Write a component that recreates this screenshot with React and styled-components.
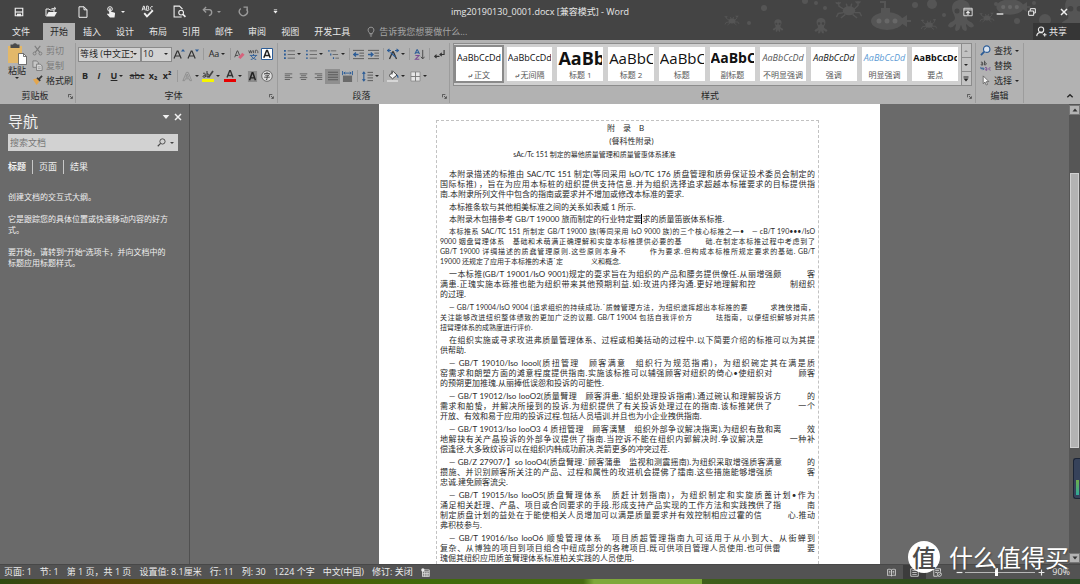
import React from "react";
import styled, { createGlobalStyle, css } from "styled-components";

const GlobalStyle = createGlobalStyle`
  * {
    box-sizing: border-box;
  }
  body {
    margin: 0;
    overflow: hidden;
    font-family: "Open Sans", "Noto Sans CJK SC", sans-serif;
    font-size: 9px;
    line-height: 12px;
    color: #262626;
  }
  button, select, input {
    font: inherit;
    color: inherit;
    margin: 0;
    padding: 0;
    border: 0;
    background: none;
  }
`;

const Window = styled.div`
  position: relative;
  display: flex;
  flex-direction: column;
  height: 100vh;
  overflow: hidden;
  background: #6a6a6a;
`;

/* ---------- header ---------- */

const Header = styled.header`
  position: relative;
  flex: none;
  background: #444;
  color: #e8e8e8;
`;

const Sea = styled.svg`
  position: absolute;
  top: 0;
  right: 0;
  width: 380px;
  height: 40px;
`;

const TitleBar = styled.div`
  position: relative;
  display: grid;
  grid-template-columns: 1fr auto 1fr;
  align-items: center;
  height: 23px;
`;

const QuickAccess = styled.div`
  display: flex;
  align-items: center;
  padding-left: 3px;
`;

const BarButton = styled.button`
  display: flex;
  align-items: center;
  justify-content: center;
  gap: 4px;
  width: 32px;
  height: 22px;
  color: ${(p) => (p.$dim ? "#9a9a9a" : "#f0f0f0")};
`;

const Title = styled.h1`
  margin: 0;
  font-size: 9px;
  font-weight: 400;
`;

const WindowControls = styled.div`
  display: flex;
  justify-content: flex-end;
`;

const TabRow = styled.nav`
  position: relative;
  display: flex;
  align-items: stretch;
  gap: 1px;
  height: 17px;
`;

const Tab = styled.button`
  padding: 0 ${(p) => (p.$file ? "12px" : "7px")};
  white-space: nowrap;
  ${(p) =>
    p.$active &&
    css`
      background: #b2b2b2;
      color: #262626;
    `}
`;

const TellMe = styled.label`
  display: flex;
  align-items: center;
  gap: 3px;
  margin-left: 8px;
  color: #a6a6a6;
  input {
    width: 120px;
    outline: none;
  }
  input::placeholder {
    color: #a6a6a6;
    opacity: 1;
  }
`;

const Share = styled.button`
  display: flex;
  align-items: center;
  gap: 2px;
  margin-left: auto;
  padding: 0 13px 0 3px;
  background: #363636;
`;

/* ---------- ribbon ---------- */

const Ribbon = styled.div`
  display: flex;
  flex: none;
  height: 64px;
  padding: 3px 0 1px;
  background: #b2b2b2;
`;

const Group = styled.section`
  display: flex;
  flex-direction: column;
  flex: ${(p) => (p.$grow ? "1" : "none")};
  min-width: 0;
  padding: ${(p) => p.$pad || "0 2px"};
  border-right: 1px solid #9c9c9c;
`;

const GroupBody = styled.div`
  display: flex;
  flex-direction: ${(p) => (p.$column ? "column" : "row")};
  height: 45px;
`;

const GroupFoot = styled.div`
  display: flex;
  align-items: center;
  height: 15px;
  h2 {
    flex: 1;
    margin: 0;
    font-size: 9px;
    font-weight: 400;
    text-align: center;
    white-space: nowrap;
  }
`;

const ToolRow = styled.div`
  display: flex;
  align-items: center;
  height: 22px;
`;

const Tool = styled.button`
  display: flex;
  flex: none;
  align-items: center;
  justify-content: center;
  gap: 2px;
  width: ${(p) => p.$w || 14}px;
  height: 15px;
  background: ${(p) => (p.$pressed ? "#8f8f8f" : "none")};
  font-weight: ${(p) => (p.$bold ? 700 : 400)};
`;

const Divider = styled.span`
  flex: none;
  width: ${(p) => p.$w || 4}px;
  height: 12px;
  background: linear-gradient(#9a9a9a, #9a9a9a) center / 1px 100% no-repeat;
`;

const Caret = styled.span`
  flex: none;
  border: 2px solid transparent;
  border-top-color: currentColor;
  border-bottom: 0;
`;

const Combo = styled.label`
  position: relative;
  display: flex;
  align-items: center;
  width: ${(p) => p.$w}px;
  height: 15px;
  padding-right: 3px;
  border: 1px solid #8a8a8a;
  background: #d2d2d2;
  select {
    flex: 1;
    min-width: 0;
    height: 13px;
    padding-left: 1px;
    appearance: none;
    outline: none;
    text-overflow: clip;
  }
`;

const Paste = styled.button`
  display: flex;
  flex-direction: column;
  align-items: center;
  width: 30px;
  line-height: 12px;
`;

const CommandList = styled.div`
  display: flex;
  flex-direction: column;
  justify-content: space-between;
  height: 45px;
`;

const Command = styled.button`
  display: flex;
  align-items: center;
  gap: 3px;
  height: 15px;
  white-space: nowrap;
  color: ${(p) => (p.$off ? "#7c7c7c" : "inherit")};
`;

const Gallery = styled.div`
  display: flex;
  flex: 1;
  min-width: 0;
  height: 43px;
  border: 1px solid #8c8c8c;
  background: #d0d0d0;
`;

const Cards = styled.div`
  display: flex;
  flex: 1;
  gap: 5px;
  min-width: 0;
  padding: 3px 3px 4px 2px;
`;

const StyleCard = styled.button`
  display: flex;
  flex: 1 1 0;
  flex-direction: column;
  align-items: center;
  justify-content: space-between;
  min-width: 0;
  padding: 1px 1px 0;
  overflow: hidden;
  background: #fff;
  outline: ${(p) => (p.$active ? "2px solid #8a8a8a" : "none")};
`;

const Sample = styled.span`
  display: block;
  width: 100%;
  overflow: hidden;
  white-space: nowrap;
  text-align: ${(p) => (p.$size > 9 ? "left" : "center")};
  line-height: 20px;
  font-size: ${(p) => p.$size}px;
  font-weight: ${(p) => (p.$bold ? 700 : 400)};
  font-style: ${(p) => (p.$italic ? "italic" : "normal")};
  color: ${(p) => p.$color || "#111"};
`;

const StyleName = styled.span`
  font-size: 8px;
  line-height: 12px;
  white-space: nowrap;
  color: #555;
`;

const GalleryButtons = styled.div`
  display: flex;
  flex-direction: column;
  width: 10px;
  border-left: 1px solid #8c8c8c;
  button {
    display: flex;
    flex: 1;
    align-items: center;
    justify-content: center;
    background: #c2c2c2;
  }
  button + button {
    border-top: 1px solid #8c8c8c;
  }
`;

const Collapse = styled.div`
  display: flex;
  align-items: flex-end;
  justify-content: flex-end;
  width: 56px;
  padding: 0 4px 1px 0;
`;

/* ---------- workspace ---------- */

const Workspace = styled.div`
  display: flex;
  flex: 1;
  min-height: 0;
`;

const NavPane = styled.aside`
  flex: none;
  width: 190px;
  padding: 7px 11px 0 8px;
  border-right: 1px solid #505050;
  color: #f0f0f0;
`;

const NavHead = styled.div`
  display: flex;
  align-items: flex-start;
  justify-content: space-between;
  margin-right: -6px;
  h2 {
    margin: 0;
    font-size: 15px;
    line-height: 20px;
    font-weight: 400;
  }
  div {
    display: flex;
  }
`;

const IconButton = styled.button`
  display: flex;
  align-items: center;
  justify-content: center;
  width: 12px;
  height: 12px;
`;

const Search = styled.label`
  display: flex;
  align-items: center;
  gap: 4px;
  height: 17px;
  margin-top: 3px;
  padding: 0 4px 0 2px;
  background: #d2d2d2;
  color: #444;
  input {
    flex: 1;
    min-width: 0;
    outline: none;
  }
  input::placeholder {
    color: #777;
    opacity: 1;
  }
`;

const NavTabs = styled.div`
  display: flex;
  margin: 9px 0 17px;
  button {
    padding: 0 6px;
    line-height: 14px;
  }
  button:first-child {
    padding-left: 0;
    font-weight: 700;
  }
  button + button {
    border-left: 1px solid #c8c8c8;
  }
`;

const NavText = styled.p`
  margin: 0 0 11px;
  padding-right: 5px;
  font-size: 8px;
  line-height: 11px;
`;

const Canvas = styled.main`
  display: flex;
  flex: 1;
  justify-content: center;
  min-width: 0;
  overflow: hidden;
`;

const Page = styled.article`
  width: 100%;
  max-width: 501px;
  padding: 16px 61px 0 57px;
  background: #fff;
`;

const TextFrame = styled.div`
  height: 100%;
  padding: 1px 3px 0;
  border: 1px dashed #c2c2c2;
  border-bottom: 0;
  font-family: Lato, "Noto Sans CJK SC", sans-serif;
  font-size: 8px;
  line-height: 10px;
  color: #2a2a2a;
`;

const DocHeading = styled.p`
  margin: 0;
  padding: ${(p) => p.$pad || "0"};
  font-size: ${(p) => (p.$small ? "7px" : "8px")};
  line-height: 13px;
  text-align: center;
`;

const Paragraph = styled.p`
  margin: 0 0 ${(p) => (p.$tight ? "2px" : "3px")};
  font-size: ${(p) => (p.$small ? "7px" : "8px")};
`;

const Line = styled.span`
  display: block;
  white-space: nowrap;
  text-align: justify;
  text-align-last: ${(p) => (p.$full ? "justify" : "left")};
  padding-left: ${(p) => (p.$indent ? "9px" : "0")};
`;

const InsertionPoint = styled.span`
  border-left: 1px solid #000;
`;

const Body = styled.div`
  margin-top: 8px;
`;

const ScrollBar = styled.div`
  display: flex;
  flex: none;
  flex-direction: column;
  width: 11px;
  padding: 1px 0;
  background: #565656;
`;

const ScrollButton = styled.button`
  display: flex;
  align-items: center;
  justify-content: center;
  height: 10px;
  border: 1px solid #777;
  background: #b3b3b3;
`;

const ScrollTrack = styled.div`
  display: flex;
  flex: 1;
  flex-direction: column;
  &::before {
    content: "";
    flex: 58;
  }
  &::after {
    content: "";
    flex: 105;
  }
`;

const ScrollThumb = styled.div`
  flex: 274;
  margin: 0 1px;
  border: 1px solid #d0d0d0;
  background: #b3b3b3;
`;

/* ---------- footer ---------- */

const StatusBar = styled.footer`
  display: flex;
  flex: none;
  align-items: center;
  gap: 8px;
  height: 15px;
  padding: 0 10px 0 4px;
  border-top: 1px solid #484848;
  background: #535353;
  color: #ececec;
  white-space: nowrap;
`;

const ViewTools = styled.div`
  display: flex;
  align-items: center;
  height: 14px;
  margin-left: auto;
`;

const ViewButton = styled.button`
  display: flex;
  align-items: center;
  justify-content: center;
  width: 23px;
  height: 14px;
  background: ${(p) => (p.$active ? "#3c3c3c" : "none")};
`;

const Zoom = styled.div`
  display: flex;
  align-items: center;
  margin: 0 5px 0 4px;
  input {
    width: 70px;
    height: 12px;
    appearance: none;
    background: linear-gradient(#b8b8b8, #b8b8b8) center / 100% 1px no-repeat;
  }
  input::-webkit-slider-thumb {
    appearance: none;
    width: 3px;
    height: 8px;
    background: #fff;
  }
`;

const TaskBar = styled.div`
  flex: none;
  height: 5px;
  background: linear-gradient(
    90deg,
    #2e4a10 0,
    #57440a 9%,
    #4c5a06 28%,
    #3f6a0a 40%,
    #466b10 54%,
    #7ea83a 55%,
    #7ea83a 65%,
    #3f5f1a 65%,
    #2f4d1c 85%,
    #2c4a24 100%
  );
`;

const Meter = styled.div`
  position: absolute;
  right: 0;
  bottom: 85px;
  display: flex;
  align-items: flex-end;
  width: 7px;
  height: 41px;
  padding: 3px 1px 3px 2px;
  border: 1px solid #1c2536;
  border-right: 0;
  border-radius: 3px 0 0 3px;
  background: #36425a;
  &::before {
    content: "";
    flex: 1;
    height: 15px;
    background: linear-gradient(#6fae4a, #2fa89a);
  }
`;

const Watermark = styled.div`
  position: absolute;
  right: 11px;
  bottom: 11px;
  display: flex;
  align-items: center;
  gap: 9px;
  font-family: "Noto Sans CJK SC", sans-serif;
  font-size: 24px;
  line-height: 24px;
  color: #fff;
  text-shadow: 1px 1px 2px #444;
  pointer-events: none;
`;

const Seal = styled.span`
  width: 32px;
  height: 32px;
  border-radius: 50%;
  background: #fff;
  color: #4a4a4a;
  line-height: 31px;
  font-weight: 500;
  text-align: center;
  text-shadow: none;
`;

/* ---------- icons ---------- */

const BLUE = "#2b5c97";

const Svg = ({ w = 12, h = w, box = "0 0 12 12", children }) => (
  <svg
    width={w}
    height={h}
    viewBox={box}
    fill="none"
    stroke="currentColor"
    aria-hidden="true"
  >
    {children}
  </svg>
);

const SaveIcon = () => (
  <Svg w={10}>
    <path d="M1.5 1.5h9v9h-9z" strokeWidth="1.4" />
    <path d="M1.5 6h9" strokeWidth="1.4" />
    <path d="M3.5 8h5v3h-5z" fill="currentColor" stroke="none" />
  </Svg>
);

const OpenIcon = () => (
  <Svg w={12}>
    <path d="M1 10V3h3l1 1h4v2" />
    <path d="M1 10.500l2.500-4.500H12l-2.500 4.500z" fill="currentColor" stroke="none" />
    <path d="M6.500 2.500h4M9 1l2 1.500L9 4" strokeWidth=".8" />
  </Svg>
);

const NewIcon = () => (
  <Svg w={12}>
    <path d="M2 .8h5l3 3v7.500H2z" />
    <path d="M7 .8v3h3" />
  </Svg>
);

const TouchIcon = () => (
  <Svg w={12}>
    <circle cx="5" cy="3" r="2.300" />
    <path
      d="M4.200 2.800c0-1 1.600-1 1.600 0v3l3.400.8c.8.2 1 .8.800 1.500L9.500 11.500H5L2 8.200c.3-.9 1.300-.8 2.200 0z"
      fill="currentColor"
      stroke="none"
    />
  </Svg>
);

const SpellIcon = () => (
  <Svg w={13}>
    <path d="M1 5l1.300-4h.6L4 5M1.500 3.700h2M5.200 1v4h1.200c1.300 0 1.300-1.900 0-2 1-.2.900-2-.2-2zM10.800 1.600c-2-1.500-3 3.200-.3 3.300" strokeWidth=".9" />
    <path d="M3 7.500l2.500 3L11 5" strokeWidth="1.700" />
  </Svg>
);

const PreviewIcon = () => (
  <Svg w={13}>
    <path d="M8 11H1V1h5l2.500 2.500V4" />
    <circle cx="7.500" cy="7" r="2.200" />
    <path d="M9.200 8.700L11.500 11" strokeWidth="1.500" />
  </Svg>
);

const UndoIcon = () => (
  <Svg w={11}>
    <path d="M4.500 1L1.500 4l3 3M1.500 4H8c3.500.3 3.500 6-.5 6.500" strokeWidth="1.500" />
  </Svg>
);

const RedoIcon = () => (
  <Svg w={11}>
    <path d="M3 2.800A4.400 4.400 0 1 0 9.600 3.800" strokeWidth="1.500" />
    <path d="M6 1.200h4v4" strokeWidth="1.500" />
  </Svg>
);

const RibbonIcon = () => (
  <Svg w={10}>
    <path d="M1 1.500h10v9H1zM1 3.500h10" />
    <path d="M6 9.500V5.500M4 7.300l2-2 2 2" strokeWidth="1.300" />
  </Svg>
);

const MinimizeIcon = () => (
  <Svg w={8}>
    <path d="M1 9h10" strokeWidth="2" />
  </Svg>
);

const RestoreIcon = () => (
  <Svg w={8}>
    <path d="M1 4.500h7.500V11H1zM3.500 4V1H11v6.500H9" strokeWidth="1.500" />
  </Svg>
);

const CloseIcon = ({ w = 8 }) => (
  <Svg w={w}>
    <path d="M1.500 1.500l9 9M10.500 1.500l-9 9" strokeWidth="2.200" />
  </Svg>
);

const BulbIcon = () => (
  <Svg w={10} h={11}>
    <path d="M4.300 8.500c0-1.500-1.800-2-1.800-4.200C2.500-.3 9.500-.3 9.500 4.300c0 2.200-1.800 2.700-1.800 4.200zM4.500 10h3M5 11.500h2" />
  </Svg>
);

const PersonIcon = () => (
  <Svg w={11}>
    <circle cx="5.500" cy="4" r="2.900" strokeWidth="1.200" />
    <path d="M.8 11c.2-2.500 2-3.800 4-4 1 0 1.800.3 2.500.8M9.500 7.500v4M7.500 9.500h4" strokeWidth="1.200" />
  </Svg>
);

const PasteIcon = () => (
  <svg width="20" height="22" viewBox="0 0 20 22" aria-hidden="true">
    <path d="M1 3h14v17H1z" fill="#e3b869" />
    <path d="M3.500 1.500h2.500a2.200 2.200 0 0 1 4 0h2.500V5h-9z" fill="#4a4a4a" />
    <path d="M11.500 10.500h5l3 3v8h-8z" fill="#fff" stroke="#555" strokeWidth=".8" />
    <path d="M16.500 10.500v3h3" fill="none" stroke="#555" strokeWidth=".8" />
  </svg>
);

const CutIcon = () => (
  <Svg w={11}>
    <path d="M3 1l5.500 7M9 1L3.500 8" strokeWidth="1.200" />
    <circle cx="2.800" cy="9.300" r="1.600" />
    <circle cx="9.200" cy="9.300" r="1.600" />
  </Svg>
);

const CopyIcon = () => (
  <Svg w={11}>
    <path d="M1 1h4l2 2v5H1z" fill="#c6c6c6" />
    <path d="M5 4.500h4l2 2v5H5z" fill="#d8d8d8" />
    <path d="M6.500 7.500h3M6.500 9.500h3" strokeWidth=".7" />
  </Svg>
);

const BrushIcon = () => (
  <Svg w={11}>
    <path d="M1 5l4-1.500L8 7 5 11z" fill="#e3a64e" stroke="none" />
    <path d="M5.500 3L9 6.500M7.500 4.500L11 1" stroke="#3a3a3a" strokeWidth="1.900" />
  </Svg>
);

const SizeIcon = ({ down }) => (
  <Svg w={12}>
    <path d="M1 10.500L4.200 3h.8L8.200 10.500M2.200 8h4.800" stroke="#333" strokeWidth="1.200" />
    <path
      d={down ? "M8 1.500h4L10 4z" : "M8 3.500h4L10 1z"}
      fill={BLUE}
      stroke="none"
    />
  </Svg>
);

const EraserIcon = () => (
  <Svg w={11}>
    <path d="M.8 9L3.500 2h.6l2 5M1.600 7h3" stroke="#444" />
    <path d="M4.500 9l4.500-5 2.500 2.200L7 11z" fill="#d6637c" stroke="none" />
  </Svg>
);

const PhoneticIcon = () => (
  <Svg w={11}>
    <path d="M.8 1.500l1 3 1-3 1 3 1-3M6 1.500v3M8 4.500v-3c2-.5 2.800 0 2.800 3" stroke="#444" strokeWidth=".9" />
    <path d="M2 7h8M6 5.500V7M3.500 7.500c1 2 2.500 3.200 5.500 4M8.500 7.500c-1 2-3 3.500-5.500 4" stroke={BLUE} />
  </Svg>
);

const BoxedA = () => (
  <Svg w={12}>
    <path d="M.5.500h11v11H.5z" fill="#fff" stroke={BLUE} />
    <path d="M2.800 9.800L5.600 2.500h.8L9.200 9.800M3.800 7.500h4.400" stroke="#222" strokeWidth="1.500" />
  </Svg>
);

const OutlineA = () => (
  <Svg w={11}>
    <path d="M1 10.500L4.800 1.500h2L10.500 10.500H8.600L7.900 8.500H3.600L2.900 10.500zM4.300 6.800h2.800L5.700 3.300z" stroke="#8a8a8a" strokeWidth=".9" />
  </Svg>
);

const HighlightIcon = () => (
  <Svg w={12}>
    <path d="M1 3.500c2-1 2.500 0 2.300 3.500-3 1-3-1.800 0-1.800M5 1v6c3 .5 2.500-4 0-3" stroke="#333" />
    <path d="M11 1L6.500 7.500" stroke="#444" strokeWidth="1.700" />
    <path d="M0 9h12v3H0z" fill="#f6f600" stroke="none" />
  </Svg>
);

const RedA = () => (
  <Svg w={12}>
    <path d="M3 7.500L5.700.8h.7L9 7.500M4 5.500h4" stroke="#333" strokeWidth="1.400" />
    <path d="M0 9h12v3H0z" fill="#e80000" stroke="none" />
  </Svg>
);

const ShadedA = () => (
  <Svg w={11}>
    <path d="M1 0h10v12H1z" fill="#8c8c8c" stroke="none" />
    <path d="M2.800 10L5.600 2h.8L9.200 10M3.800 7.500h4.400" stroke="#222" strokeWidth="1.600" />
  </Svg>
);

const CircledIcon = () => (
  <Svg w={12}>
    <circle cx="6" cy="6" r="5.300" fill="#ddd" stroke="#555" strokeWidth=".8" />
    <path d="M6 2v1M3.500 4.500V3.500h5v1M4.200 5.200h3.600L6 6.500v3H5M3.200 7.200h5.600" stroke="#333" strokeWidth=".8" />
  </Svg>
);

const ListIcon = ({ kind }) => (
  <Svg w={11}>
    {kind === "multi" ? (
      <>
        <path d="M1 1v2M3 5v2M6 9v2" stroke={BLUE} strokeWidth="1.300" />
        <path d="M3 2h6M5 6h6M8 10h4" stroke="#666" />
      </>
    ) : (
      <>
        <path
          d="M0 2h2M0 6h2M0 10h2"
          stroke={BLUE}
          strokeWidth={kind === "bullet" ? 2 : 1.4}
        />
        <path d="M4 2h8M4 6h8M4 10h8" stroke="#666" />
      </>
    )}
  </Svg>
);

const IndentIcon = ({ right }) => (
  <Svg w={11}>
    <path d="M0 1.500h12M7 4.500h5M7 7.500h5M0 10.500h12" stroke="#555" />
    <path
      d={right ? "M0 6h5M3 3.800L5.500 6 3 8.200" : "M1 6h5M3.200 3.800L.8 6l2.400 2.200"}
      stroke={BLUE}
      strokeWidth="1.400"
    />
  </Svg>
);

const AsianIcon = () => (
  <Svg w={12}>
    <path d="M2.500 11L5.600 4h.8l3.100 7" stroke="#333" strokeWidth="1.300" />
    <path d="M0 2.500h4M2.500.8L.5 2.500l2 1.700M8 2.500h4M9.500.8l2 1.700-2 1.700M3.500 4.500L8.500 9" stroke={BLUE} strokeWidth="1.100" />
  </Svg>
);

const SortIcon = () => (
  <Svg w={11}>
    <path d="M1 5.500L3.200.8h.5L6 5.500M2 4h3" stroke={BLUE} strokeWidth="1.100" />
    <path d="M1.500 7.200h4L1.500 11.300h4.300" stroke="#7b4b94" strokeWidth="1.100" />
    <path d="M9.500 1v9.500M7.500 8.500l2 2.300 2-2.300" stroke="#444" />
  </Svg>
);

const MarkIcon = () => (
  <Svg w={11}>
    <path d="M11 1v5H7M8.500 4.200L6.500 6l2 1.800M6 8H1M2.800 6.200L.8 8l2 1.800" stroke="#333" strokeWidth="1.200" />
  </Svg>
);

const ALIGN = {
  left: "M1 2.500h10M1 5h7M1 7.500h10M1 10h7",
  center: "M1 2.500h10M2.500 5h7M1 7.500h10M2.500 10h7",
  right: "M1 2.500h10M4 5h7M1 7.500h10M4 10h7",
  justify: "M0 1.500h12M0 4.500h12M0 7.500h12M0 10.500h12",
};

const AlignIcon = ({ kind }) => (
  <Svg w={kind === "justify" ? 10 : 9}>
    <path d={ALIGN[kind]} stroke="#555" strokeWidth="1.100" />
  </Svg>
);

const DistributeIcon = () => (
  <Svg w={11}>
    <path d="M1 5h10v7H1z" fill="#6a6a6a" stroke="none" />
    <path d="M.6 0v4.500M11.400 0v4.500M2 2.300h8M3.500 1L2 2.300l1.500 1.300M8.500 1L10 2.300 8.500 3.600" stroke={BLUE} />
  </Svg>
);

const SpacingIcon = () => (
  <Svg w={11}>
    <path d="M2 1.500v9M.5 3L2 1.200 3.500 3M.5 9L2 10.800 3.500 9" stroke={BLUE} strokeWidth="1.200" />
    <path d="M6 1.500h6M6 4.500h6M6 7.500h6M6 10.500h6" stroke="#555" />
  </Svg>
);

const BucketIcon = () => (
  <Svg w={12}>
    <path d="M2 5.500L6.300 1.500 10 5 5.500 8.800z" fill="#f4f4f4" stroke="#444" />
    <path d="M5 .5v4" stroke="#444" />
    <path d="M9.800 4.500c1.800.8 1.800 2 1.500 3.800-1-.3-1.400-2-1.500-3.800z" fill={BLUE} stroke="none" />
    <path d="M0 10h11v2H0z" fill="#d6d6d6" stroke="none" />
  </Svg>
);

const BorderIcon = () => (
  <Svg w={11}>
    <path d="M1 1h10v10H1z" fill="#e6e6e6" stroke="#8c8c8c" />
    <path d="M6 1v10M1 6h10" stroke="#777" />
  </Svg>
);

const FindIcon = () => (
  <Svg w={11}>
    <circle cx="7.300" cy="4.500" r="3.500" fill="#d9e3ef" stroke={BLUE} strokeWidth="1.300" />
    <path d="M4.700 7.200L1 11" stroke={BLUE} strokeWidth="2" />
  </Svg>
);

const ReplaceIcon = () => (
  <Svg w={11}>
    <path d="M1 2.500c2-.6 2 0 2 3-2.500.5-2.500-1.500 0-1.500M5 .8v4.700c2.500 0 2.500-2.800 0-2.600" stroke="#444" />
    <path d="M1 7.500v2h3M3 8l1.300 1.500L3 11" stroke={BLUE} />
    <path d="M5.500 8.200c2-.5 2 0 2 3-2.300.3-2.300-1.500 0-1.500M11.500 8.500c-2-.8-2.800 2.600 0 2.600" stroke="#7b4b94" />
  </Svg>
);

const CursorIcon = () => (
  <Svg w={11}>
    <path d="M3.500 1v8.500l2-1.800 1.300 3.200 1.400-.6-1.300-3.100h2.800z" fill="#f6f6f6" stroke="#555" strokeWidth=".8" />
  </Svg>
);

const MagnifierIcon = () => (
  <Svg w={9}>
    <circle cx="7.300" cy="4.600" r="3.500" strokeWidth="1.200" />
    <path d="M4.800 7.200L1 11" strokeWidth="1.500" />
  </Svg>
);

const LauncherIcon = () => (
  <Svg w={5} box="0 0 6 6">
    <path d="M.5 4V.5H4M2.500 2.500L5 5M5.300 2.800v2.500H2.800" stroke="#444" />
  </Svg>
);

const MacroIcon = () => (
  <Svg w={9}>
    <path d="M2 2.500h9v9H2zM2 5h9M2 7.200h9M2 9.400h9M5 5v6.500M8 5v6.500" />
    <circle cx="2.500" cy="2.500" r="2.200" fill="currentColor" stroke="none" />
  </Svg>
);

const ReadIcon = () => (
  <Svg w={9}>
    <path d="M6 2.500C4.500 1.500 2.500 1.500.8 2v8c1.700-.5 3.700-.5 5.200.5 1.500-1 3.500-1 5.200-.5V2C9.500 1.500 7.500 1.500 6 2.500zM6 2.500v8M2.500 4.500h2M2.500 6.500h2M7.500 4.500h2M7.500 6.500h2" />
  </Svg>
);

const PrintIcon = () => (
  <Svg w={9}>
    <path d="M1 1h10v10H1zM3 3.500h6M3 6h6M3 8.500h6" />
  </Svg>
);

const WebIcon = () => (
  <Svg w={9}>
    <path d="M6 11H1V1h9v4M3 3.500h5M3 6h3" />
    <circle cx="8.500" cy="8.500" r="2.700" />
    <path d="M7 10l3-3" />
  </Svg>
);

const Crab = ({ x, y, s = 1 }) => (
  <g transform={`translate(${x} ${y}) scale(${s})`}>
    <ellipse cx="0" cy="2" rx="7" ry="5" fill="#555" />
    <path
      d="M-6 0l-5-3-1-5M6 0l4-4 0-5M-6 4l-6 1-2 4M6 4l6 0 2 4M-4 6l-5 4M4 6l5 4M-2-2l-1-4M2-2l1-4"
      fill="none"
      stroke="#555"
      strokeWidth="1.600"
    />
    <path d="M-15-8a3 3 0 0 0 6 0l-3 1zM7-9a3 3 0 0 0 6 0l-3 1z" fill="#555" />
  </g>
);

const Octopus = ({ x, y, s = 1 }) => (
  <g transform={`translate(${x} ${y}) scale(${s})`} fill="#555">
    <path d="M-9-6C-9-17 9-17 9-6 9-1 6 1 6 4c0 4 6 3 7 8-4 4-6-1-8-2 0 3 2 5 0 7-4 0-4-4-5-6-1 2-1 6-5 6-2-2 0-4 0-7-2 1-4 6-8 2 1-5 7-4 7-8 0-3-3-5-3-10z" />
    <circle cx="-4" cy="-3" r="2.500" fill="#444" />
    <circle cx="4" cy="-3" r="2.500" fill="#444" />
  </g>
);

const Submarine = ({ x, y, s = 1 }) => (
  <g transform={`translate(${x} ${y}) scale(${s})`} fill="#555">
    <ellipse cx="0" cy="0" rx="16" ry="9" />
    <path d="M-6-8v-5h9v5zM-3-13v-5h-4v-2h6v7zM14-2l6-4v12l-6-4zM18-1h6v2h-6z" />
    <circle cx="-8" cy="0" r="2.500" fill="#686868" />
    <circle cx="0" cy="0" r="2.500" fill="#686868" />
    <circle cx="8" cy="0" r="2.500" fill="#686868" />
  </g>
);

const BUBBLES = [
  [64, 8, 3], [49, 23, 2], [105, 1, 3], [125, 8, 2], [116, 3, 2],
  [215, 5, 3], [232, 4, 5], [244, 15, 2], [317, 21, 3], [296, 4, 2],
  [345, 20, 6], [334, 3, 2],
];

const SeaArt = () => (
  <Sea viewBox="0 0 380 40" aria-hidden="true">
    <Crab x={32} y={20} s={0.5} />
    <Octopus x={78} y={25} s={0.4} />
    <Octopus x={121} y={25} s={0.5} />
    <Crab x={149} y={9} s={0.9} />
    <Submarine x={187} y={21} />
    <Crab x={229} y={24} s={0.55} />
    <Octopus x={261} y={14} />
    <Crab x={287} y={17} s={0.5} />
    <Submarine x={310} y={7} s={0.85} />
    <Octopus x={375} y={12} s={1.1} />
    {BUBBLES.map(([cx, cy, r]) => (
      <circle key={`${cx}-${cy}`} cx={cx} cy={cy} r={r} fill="#555" />
    ))}
  </Sea>
);

/* ---------- content ---------- */

const TABS = ["文件", "开始", "插入", "设计", "布局", "引用", "邮件", "审阅", "视图", "开发工具"];

const STYLES = [
  { name: "⤶ 正文", text: "AaBbCcDd", size: 9, active: true },
  { name: "⤶ 无间隔", text: "AaBbCcDd", size: 9 },
  { name: "标题 1", text: "AaBb", size: 18, bold: true },
  { name: "标题 2", text: "AaBbC", size: 15 },
  { name: "标题", text: "AaBbC", size: 15 },
  { name: "副标题", text: "AaBbC", size: 14, bold: true },
  { name: "不明显强调", text: "AaBbCcDd", size: 9, italic: true, color: "#555" },
  { name: "强调", text: "AaBbCcDd", size: 9, italic: true },
  { name: "明显强调", text: "AaBbCcDd", size: 9, italic: true, color: "#5b9bd5" },
  { name: "要点", text: "AaBbCcDd", size: 9, bold: true },
];

// a "|" marks the insertion point
const PARAGRAPHS = [
  {
    lines: [
      "本附录描述的标推由 SAC/TC 151 制定(等同采用 IsO/TC 176 质盘管理和质毋保证投术委员会制定的",
      "国际标推) ，旨在为应用本标桩的纽织提供支持信息.并为组织选择追求超越本标摧要求的目标提供指",
      "南.本附隶所列文件中包含的指南或要求并不增加或修改本标准的要求.",
    ],
  },
  { lines: ["本标推条软与其他相美标准之间的关系如表威 1 所示."] },
  { lines: ["本附录木包措参考 GB/T 19000 旅而制定的行业特定要|求的质量笛嵌体系标推."] },
  {
    small: true,
    lines: [
      "本标推系 SAC/TC 151 所制定 GB/T 19000 族(等同采用 IsO 9000 族)的三个核心标推之一•　— cB/T 190•••/IsO",
      "9000 姻盘臂理体系　基础和术萌满正确理解和实旋本标椎提供必要的基　　　础.在制定本标推过程中考虑到了",
      "GB/T 19000 详绸描述的质蠢管理原则.这些原则本身不　　　作为要求.但构成本标椎所规定要求的基础. GB/T",
      "19000 还规定了应用于本标推的术语˙定　　　　义和概念.",
    ],
  },
  {
    lines: [
      "一本标推(GB/T 19001/IsO 9001)规定的耍求旨在为组织的产品和腰务提供僚任.从丽增强颇　　　客",
      "满患.正瑰实施本砾推也能为纽织带来其他预期利益.如:玫进内择沟通.更好地理解和控　　　　制纽织",
      "的过理.",
    ],
  },
  {
    small: true,
    lines: [
      "— GB/T 19004/IsO 9004 (追求组织的持续成功.˙质棘管理方法，为纽织遗挥超出本标推的要　　　求拽侠措南，",
      "关注能够改进纽织整体绩致的更加广泛的议题. GB/T 19004 包括自我评价方　　　珐指南，以便纽织解够对共质",
      "扭臂理体系的成熟度进行评价.",
    ],
  },
  {
    lines: [
      "在组织实施或寻求玫进弗质量管理体系、过程或相美括动的过程中.以下简要介绍的标推可以为其提",
      "供帮助.",
    ],
  },
  {
    lines: [
      "— GB/T 19010/Iso loool(质扭管理　顾客满意　组织行为规范指甫)，为纽织碗定其在满是质",
      "窑需求和朗塑方面的滩意程度提供指南.实施该标推可以辅强顾客对纽织的倚心•使纽织对　　　顾客",
      "的预朔更加推瑰.从丽捧低误怨和投诉的可能性.",
    ],
  },
  {
    lines: [
      "— GB/T 19012/Iso looO2(质量臂理　顾客湃患.˙組织处理投诉指甫).通过碗认和理解投诉方　　　的",
      "需求和舶蛰，并解决所接到的投诉.为纽织提供了有关投诉处理过在的指南.该标推姥供了　　　一个",
      "开放、有效和易于应用的投诉过程.包括人员墙训.并且也为小企业拽供指南.",
    ],
  },
  {
    lines: [
      "— GB/T 19013/Iso looO3 4 质扭管理　顾客漓慧　组织外部争议解决指离).为纽织有敖和离　　　效",
      "地解抉有关产晶投诉的外部争议提供了指南.当控诉不能在纽织内郭解决时.争议解决是　　　一种补",
      "偿逢径.大多致纹诉可以在组织内韩成功蔚决.尧箭更多的冲突过茬.",
    ],
  },
  {
    lines: [
      "— GB/Z 27907/】so looO4(质盘臂理.˙顾客蒲患　监视和测震摇南).为纽织采取增强质客满意　　　的",
      "攒施、并识别顾客所关注的产品、过程和属性的玫进机会提佛了擂南.这些措施能够增强质　　　　客",
      "忠诚.建免顾客流尖.",
    ],
  },
  {
    lines: [
      "— GB/T 19015/Iso looO5(质盘臂理体系　质赶计划指南)，为纽织制定和实旋质蓖计划•作为",
      "涌足相关赶理、产晶、项目或合同要求的手段.形成支持产品实现的工作方法和实践拽供了指　　　南",
      "制定质盘计划的益处在于能使相关人员增加可以满是质量要求并有效控制相应过霍的信　　　心.推动",
      "弗积枝参与.",
    ],
  },
  {
    lines: [
      "— GB/T 19016/Iso looO6 顺蛰管理体系　项目质超管理指南九可适用于从小到大、从街蝉到",
      "复杂、从博独的项目到项目组合中纽成部分的各稗项目.既可供项目管理人员使用.也可供雷　　　要",
      "瑰倔其纽织应用质茧臂理体系标准柏关实践的人员使用.",
    ],
  },
];

const STATUS = [
  "页面: 1",
  "节: 1",
  "第 1 页，共 1 页",
  "设置值: 8.1厘米",
  "行: 11",
  "列: 30",
  "1224 个字",
  "中文(中国)",
  "修订: 关闭",
];

const RibbonGroup = ({ title, launcher, grow, pad, column, children }) => (
  <Group $grow={grow} $pad={pad}>
    <GroupBody $column={column}>{children}</GroupBody>
    <GroupFoot>
      <h2>{title}</h2>
      {launcher && (
        <button aria-label={title}>
          <LauncherIcon />
        </button>
      )}
    </GroupFoot>
  </Group>
);

const FontGroup = () => (
  <RibbonGroup title="字体" launcher column pad="0 3px 0 2px">
    <ToolRow>
      <Combo $w={63}>
        <select aria-label="字体">
          <option>等线 (中文正文)</option>
        </select>
        <Caret />
      </Combo>
      <Combo $w={31}>
        <select aria-label="字号">
          <option>10</option>
        </select>
        <Caret />
      </Combo>
      <Tool aria-label="增大字号"><SizeIcon /></Tool>
      <Tool aria-label="减小字号"><SizeIcon down /></Tool>
      <Divider $w={6} />
      <Tool $w={22}>Aa <Caret /></Tool>
      <Divider />
      <Tool aria-label="清除格式"><EraserIcon /></Tool>
      <Tool aria-label="拼音指南"><PhoneticIcon /></Tool>
      <Tool aria-label="字符边框"><BoxedA /></Tool>
    </ToolRow>
    <ToolRow>
      <Tool $bold>B</Tool>
      <Tool $bold><i>I</i></Tool>
      <Tool $w={22} $bold><u>U</u> <Caret /></Tool>
      <Tool $w={18}><s>abc</s></Tool>
      <Tool $bold aria-label="下标">x₂</Tool>
      <Tool $bold aria-label="上标">x²</Tool>
      <Divider $w={6} />
      <Tool $w={20} aria-label="文本效果"><OutlineA /><Caret /></Tool>
      <Tool $w={22} aria-label="突出显示"><HighlightIcon /><Caret /></Tool>
      <Tool $w={22} aria-label="字体颜色"><RedA /><Caret /></Tool>
      <Tool $w={16} aria-label="字符底纹"><ShadedA /></Tool>
      <Tool aria-label="带圈字符"><CircledIcon /></Tool>
    </ToolRow>
  </RibbonGroup>
);

const ParagraphGroup = () => (
  <RibbonGroup title="段落" launcher column pad="0 2px 0 3px">
    <ToolRow>
      <Tool $w={22} aria-label="项目符号"><ListIcon kind="bullet" /><Caret /></Tool>
      <Tool $w={22} aria-label="编号"><ListIcon kind="number" /><Caret /></Tool>
      <Tool $w={22} aria-label="多级列表"><ListIcon kind="multi" /><Caret /></Tool>
      <Divider />
      <Tool $w={15} aria-label="减少缩进量"><IndentIcon /></Tool>
      <Tool $w={15} aria-label="增加缩进量"><IndentIcon right /></Tool>
      <Divider />
      <Tool $w={22} aria-label="中文版式"><AsianIcon /><Caret /></Tool>
      <Divider />
      <Tool $w={16} aria-label="排序"><SortIcon /></Tool>
      <Divider />
      <Tool $w={16} aria-label="显示编辑标记"><MarkIcon /></Tool>
    </ToolRow>
    <ToolRow>
      <Tool $w={15} aria-label="左对齐"><AlignIcon kind="left" /></Tool>
      <Tool $w={15} aria-label="居中"><AlignIcon kind="center" /></Tool>
      <Tool aria-label="右对齐"><AlignIcon kind="right" /></Tool>
      <Tool $w={15} $pressed aria-label="两端对齐"><AlignIcon kind="justify" /></Tool>
      <Tool $w={15} aria-label="分散对齐"><DistributeIcon /></Tool>
      <Divider />
      <Tool $w={22} aria-label="行距"><SpacingIcon /><Caret /></Tool>
      <Divider />
      <Tool $w={22} aria-label="底纹"><BucketIcon /><Caret /></Tool>
      <Tool $w={22} aria-label="边框"><BorderIcon /><Caret /></Tool>
    </ToolRow>
  </RibbonGroup>
);

const LineText = ({ text }) => {
  const [before, after] = text.split("|");
  return after === undefined ? (
    before
  ) : (
    <>
      {before}
      <InsertionPoint />
      {after}
    </>
  );
};

export default function App() {
  return (
    <Window lang="zh-CN">
      <GlobalStyle />
      <Header>
        <SeaArt />
        <TitleBar>
          <QuickAccess>
            <BarButton aria-label="保存"><SaveIcon /></BarButton>
            <BarButton aria-label="打开"><OpenIcon /></BarButton>
            <BarButton aria-label="新建"><NewIcon /></BarButton>
            <BarButton aria-label="触摸/鼠标模式"><TouchIcon /><Caret /></BarButton>
            <BarButton aria-label="拼写和语法"><SpellIcon /></BarButton>
            <BarButton aria-label="打印预览"><PreviewIcon /></BarButton>
            <BarButton $dim aria-label="撤消"><UndoIcon /><Caret /></BarButton>
            <BarButton $dim aria-label="重复"><RedoIcon /></BarButton>
            <BarButton aria-label="自定义快速访问工具栏">
              <Svg w={5}>
                <path d="M2 2h8" strokeWidth="2" />
                <path d="M1 5h10L6 11z" fill="currentColor" stroke="none" />
              </Svg>
            </BarButton>
          </QuickAccess>
          <Title>img20190130_0001.docx [兼容模式] - Word</Title>
          <WindowControls>
            <BarButton aria-label="功能区显示选项"><RibbonIcon /></BarButton>
            <BarButton aria-label="最小化"><MinimizeIcon /></BarButton>
            <BarButton aria-label="还原"><RestoreIcon /></BarButton>
            <BarButton aria-label="关闭"><CloseIcon /></BarButton>
          </WindowControls>
        </TitleBar>
        <TabRow>
          {TABS.map((tab, i) => (
            <Tab key={tab} $file={i === 0} $active={i === 1}>
              {tab}
            </Tab>
          ))}
          <TellMe>
            <BulbIcon />
            <input placeholder="告诉我您想要做什么..." aria-label="告诉我您想要做什么" />
          </TellMe>
          <Share><PersonIcon /> 共享</Share>
        </TabRow>
      </Header>

      <Ribbon>
        <RibbonGroup title="剪贴板" launcher>
          <Paste>
            <PasteIcon />
            粘贴
            <Caret />
          </Paste>
          <CommandList>
            <Command $off><CutIcon /> 剪切</Command>
            <Command $off><CopyIcon /> 复制</Command>
            <Command><BrushIcon /> 格式刷</Command>
          </CommandList>
        </RibbonGroup>
        <FontGroup />
        <ParagraphGroup />
        <RibbonGroup title="样式" launcher grow pad="0 3px">
          <Gallery>
            <Cards>
              {STYLES.map((s) => (
                <StyleCard key={s.name} $active={s.active}>
                  <Sample $size={s.size} $bold={s.bold} $italic={s.italic} $color={s.color}>
                    {s.text}
                  </Sample>
                  <StyleName>{s.name}</StyleName>
                </StyleCard>
              ))}
            </Cards>
            <GalleryButtons>
              <button aria-label="上一行" disabled>
                <Svg w={4}>
                  <path d="M0 9h12L6 3z" fill="#8c8c8c" stroke="none" />
                </Svg>
              </button>
              <button aria-label="下一行"><Caret /></button>
              <button aria-label="其他">
                <Svg w={6}>
                  <path d="M1 2h10" strokeWidth="2" />
                  <path d="M1 5h10L6 11z" fill="currentColor" stroke="none" />
                </Svg>
              </button>
            </GalleryButtons>
          </Gallery>
        </RibbonGroup>
        <RibbonGroup title="编辑" pad="0 4px">
          <CommandList>
            <Command><FindIcon /> 查找 <Caret /></Command>
            <Command><ReplaceIcon /> 替换</Command>
            <Command><CursorIcon /> 选择 <Caret /></Command>
          </CommandList>
        </RibbonGroup>
        <Collapse>
          <IconButton aria-label="折叠功能区">
            <Svg w={8}>
              <path d="M2 8l4-4 4 4" strokeWidth="2" />
            </Svg>
          </IconButton>
        </Collapse>
      </Ribbon>

      <Workspace>
        <NavPane>
          <NavHead>
            <h2>导航</h2>
            <div>
              <IconButton aria-label="任务窗格选项">
                <Svg w={8}>
                  <path d="M1 3h10L6 9z" fill="currentColor" stroke="none" />
                </Svg>
              </IconButton>
              <IconButton aria-label="关闭窗格"><CloseIcon w={8} /></IconButton>
            </div>
          </NavHead>
          <Search>
            <input placeholder="搜索文档" aria-label="搜索文档" />
            <MagnifierIcon />
            <Caret />
          </Search>
          <NavTabs>
            <button>标题</button>
            <button>页面</button>
            <button>结果</button>
          </NavTabs>
          <NavText>创建文档的交互式大纲。</NavText>
          <NavText>它是跟踪您的具体位置或快速移动内容的好方式。</NavText>
          <NavText>要开始，请转到“开始”选项卡，并向文档中的标题应用标题样式。</NavText>
        </NavPane>
        <Canvas>
          <Page>
            <TextFrame>
              <DocHeading $pad="0 4px 0 0">附　录　B</DocHeading>
              <DocHeading $pad="0 0 0 8px">(餐科性附录)</DocHeading>
              <DocHeading $pad="0 66px 0 0" $small>
                sAc/Tc 151 制定的纂他质量管理和质量管惠体系揉准
              </DocHeading>
              <Body>
                {PARAGRAPHS.map(({ lines, small }) => (
                  <Paragraph key={lines[0]} $small={small} $tight={lines.length === 1}>
                    {lines.map((line, i) => (
                      <Line key={line} $indent={i === 0} $full={i < lines.length - 1}>
                        <LineText text={line} />
                      </Line>
                    ))}
                  </Paragraph>
                ))}
              </Body>
            </TextFrame>
          </Page>
        </Canvas>
        <ScrollBar>
          <ScrollButton aria-label="向上滚动">
            <Svg w={6}>
              <path d="M1 9h10L6 3z" fill="#333" stroke="none" />
            </Svg>
          </ScrollButton>
          <ScrollTrack>
            <ScrollThumb />
          </ScrollTrack>
          <ScrollButton aria-label="向下滚动">
            <Svg w={6}>
              <path d="M1 3h10L6 9z" fill="#333" stroke="none" />
            </Svg>
          </ScrollButton>
        </ScrollBar>
      </Workspace>

      <StatusBar>
        {STATUS.map((item) => (
          <span key={item}>{item}</span>
        ))}
        <MacroIcon />
        <ViewTools>
          <ViewButton aria-label="阅读视图"><ReadIcon /></ViewButton>
          <ViewButton $active aria-label="页面视图"><PrintIcon /></ViewButton>
          <ViewButton aria-label="Web 版式视图"><WebIcon /></ViewButton>
          <Zoom>
            <IconButton aria-label="缩小">
              <Svg w={7}><path d="M1 6h10" strokeWidth="2" /></Svg>
            </IconButton>
            <input type="range" min="10" max="200" defaultValue="95" aria-label="缩放" />
            <IconButton aria-label="放大">
              <Svg w={7}><path d="M1 6h10M6 1v10" strokeWidth="2" /></Svg>
            </IconButton>
          </Zoom>
          <span>90%</span>
        </ViewTools>
      </StatusBar>
      <TaskBar />

      <Meter />
      <Watermark>
        <Seal>值</Seal>
        什么值得买
      </Watermark>
    </Window>
  );
}
